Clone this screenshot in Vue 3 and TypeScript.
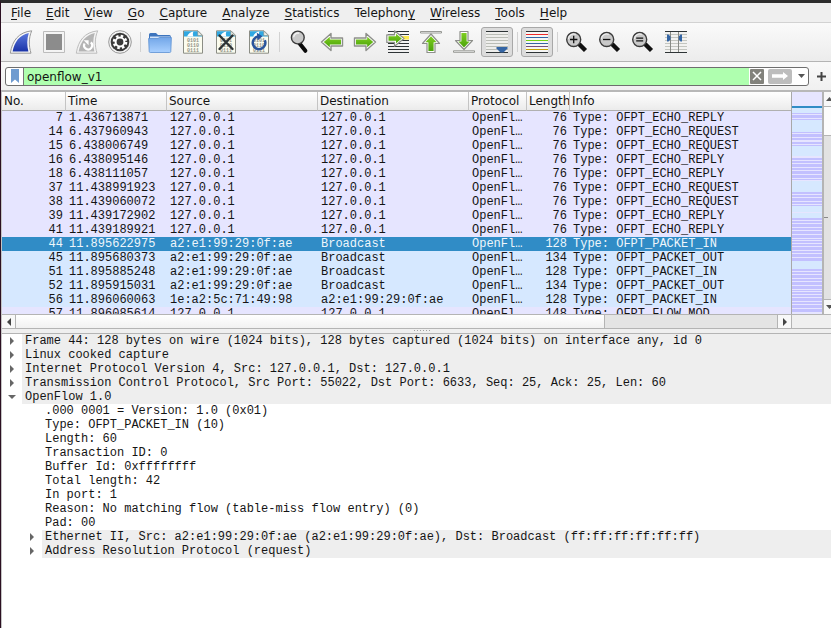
<script setup lang="ts">
import { ref } from 'vue'

interface Packet {
  no: number
  time: string
  source: string
  destination: string
  length: number
  info: string
  kind: 'echo' | 'broadcast'
}

interface DetailRow {
  text: string
  level: 0 | 1
  state: 'open' | 'closed' | 'leaf'
}

interface Stripe {
  y: number
  h: number
  tone: string
}

const menus = ['File', 'Edit', 'View', 'Go', 'Capture', 'Analyze', 'Statistics', 'Telephony', 'Wireless', 'Tools', 'Help']
const mnemonics: Record<string, number> = { Telephony: 8 }
const menuParts = menus.map((name) => {
  const i = mnemonics[name] ?? 0
  return { before: name.slice(0, i), key: name[i], after: name.slice(i + 1) }
})

const filter = ref('openflow_v1')
const selected = ref(44)
const autoScroll = ref(true)
const colorize = ref(true)

const local = '127.0.0.1'
const host = 'a2:e1:99:29:0f:ae'

function echo(no: number, time: string, type: string): Packet {
  return { no, time, source: local, destination: local, length: 76, info: `Type: OFPT_ECHO_${type}`, kind: 'echo' }
}

function lan(no: number, time: string, source: string, destination: string, length: number, type: string): Packet {
  return { no, time, source, destination, length, info: `Type: OFPT_PACKET_${type}`, kind: 'broadcast' }
}

const packets: Packet[] = [
  echo(7, '1.436713871', 'REPLY'),
  echo(14, '6.437960943', 'REQUEST'),
  echo(15, '6.438006749', 'REQUEST'),
  echo(16, '6.438095146', 'REPLY'),
  echo(18, '6.438111057', 'REPLY'),
  echo(37, '11.438991923', 'REQUEST'),
  echo(38, '11.439060072', 'REQUEST'),
  echo(39, '11.439172902', 'REPLY'),
  echo(41, '11.439189921', 'REPLY'),
  lan(44, '11.895622975', host, 'Broadcast', 128, 'IN'),
  lan(45, '11.895680373', host, 'Broadcast', 134, 'OUT'),
  lan(51, '11.895885248', host, 'Broadcast', 128, 'IN'),
  lan(52, '11.895915031', host, 'Broadcast', 134, 'OUT'),
  lan(56, '11.896060063', '1e:a2:5c:71:49:98', host, 128, 'IN'),
  { no: 57, time: '11.896085614', source: local, destination: local, length: 148, info: 'Type: OFPT_FLOW_MOD', kind: 'echo' },
]

const details: DetailRow[] = [
  { text: 'Frame 44: 128 bytes on wire (1024 bits), 128 bytes captured (1024 bits) on interface any, id 0', level: 0, state: 'closed' },
  { text: 'Linux cooked capture', level: 0, state: 'closed' },
  { text: 'Internet Protocol Version 4, Src: 127.0.0.1, Dst: 127.0.0.1', level: 0, state: 'closed' },
  { text: 'Transmission Control Protocol, Src Port: 55022, Dst Port: 6633, Seq: 25, Ack: 25, Len: 60', level: 0, state: 'closed' },
  { text: 'OpenFlow 1.0', level: 0, state: 'open' },
  { text: '.000 0001 = Version: 1.0 (0x01)', level: 1, state: 'leaf' },
  { text: 'Type: OFPT_PACKET_IN (10)', level: 1, state: 'leaf' },
  { text: 'Length: 60', level: 1, state: 'leaf' },
  { text: 'Transaction ID: 0', level: 1, state: 'leaf' },
  { text: 'Buffer Id: 0xffffffff', level: 1, state: 'leaf' },
  { text: 'Total length: 42', level: 1, state: 'leaf' },
  { text: 'In port: 1', level: 1, state: 'leaf' },
  { text: 'Reason: No matching flow (table-miss flow entry) (0)', level: 1, state: 'leaf' },
  { text: 'Pad: 00', level: 1, state: 'leaf' },
  { text: 'Ethernet II, Src: a2:e1:99:29:0f:ae (a2:e1:99:29:0f:ae), Dst: Broadcast (ff:ff:ff:ff:ff:ff)', level: 1, state: 'closed' },
  { text: 'Address Resolution Protocol (request)', level: 1, state: 'closed' },
]

/* Overview strip: one unit per line of the packet list pane. */
const blue = '#d6e8ff'
const violet = '#c2c0ff'
const stripes: Stripe[] = [
  { y: 14, h: 2, tone: '#308cc6' },
  { y: 16, h: 5, tone: blue },
  { y: 21, h: 1, tone: violet },
  { y: 23, h: 3, tone: violet },
  { y: 27, h: 1, tone: violet },
  { y: 28, h: 12, tone: blue },
  { y: 40, h: 1, tone: violet },
  { y: 42, h: 3, tone: violet },
  { y: 46, h: 2, tone: violet },
  { y: 50, h: 2, tone: violet },
  { y: 53, h: 1, tone: violet },
  { y: 54, h: 10, tone: blue },
  ...runs(66, 88),
  { y: 89, h: 11, tone: blue },
  ...runs(100, 114),
  { y: 114, h: 6, tone: blue },
  { y: 121, h: 5, tone: blue },
  ...runs(126, 169),
  { y: 169, h: 8, tone: blue },
  ...runs(177, 221),
]

function runs(from: number, to: number): Stripe[] {
  const sizes = [2, 2, 3, 2, 3, 3, 1]
  const out: Stripe[] = []
  let y = from
  for (let i = 0; y < to; i++) {
    const h = Math.min(sizes[i % sizes.length], to - y)
    out.push({ y, h, tone: violet })
    y += h + 1
  }
  return out
}
</script>

<template>
  <div class="window">
    <nav class="menubar" aria-label="Main menu">
      <button v-for="m in menuParts" :key="m.before + m.key + m.after" type="button">{{ m.before }}<u>{{ m.key }}</u>{{ m.after }}</button>
    </nav>

    <svg class="defs" width="0" height="0" aria-hidden="true">
      <defs>
        <linearGradient id="finBlue" x1="0" y1="0" x2="0" y2="1">
          <stop offset="0" stop-color="#5b78dd" />
          <stop offset="1" stop-color="#1b34a8" />
        </linearGradient>
        <linearGradient id="green" x1="0" y1="0" x2="0" y2="1">
          <stop offset="0" stop-color="#7fce22" />
          <stop offset="1" stop-color="#4ba30a" />
        </linearGradient>
        <linearGradient id="folder" x1="0" y1="0" x2="0" y2="1">
          <stop offset="0" stop-color="#72a6e8" />
          <stop offset="1" stop-color="#a9d0ff" />
        </linearGradient>
        <g id="page">
          <path d="M2.5.8H17L21.5 5.3V23.2H2.5Z" fill="#fbfcef" stroke="#8b8d85" />
          <path d="M3 1.3H16.8L21 5.5V6.5H3Z" fill="#30a8e2" />
          <path d="M6 6.5C7.5 3.5 9.5 2 12.5 1.6C11.6 3.5 11.7 5 12.4 6.5Z" fill="#fff" />
          <path d="M16.8 1V5.6H21.3Z" fill="#f2f2ea" stroke="#8b8d85" stroke-width=".6" />
          <g font-family="Liberation Mono, monospace" font-size="5" font-weight="700" fill="#94948a">
            <text x="6" y="12">0101</text>
            <text x="6" y="17">0110</text>
            <text x="6" y="22">0111</text>
          </g>
        </g>
        <g id="lens">
          <path d="M14 14L20.5 20.5" stroke="#111" stroke-width="4.4" stroke-linecap="butt" />
          <circle cx="8.7" cy="9.5" r="7" fill="#c9c9c9" stroke="#3c3c3c" stroke-width="1.4" />
          <path d="M3.4 9A5.4 5.4 0 0 1 10.8 4.4" fill="none" stroke="#eee" stroke-width="1.2" />
        </g>
        <path id="arrow" d="M1.5 12L11 3.5V8H22.5V16H11V20.5Z" stroke-linejoin="round" />
      </defs>
    </svg>

    <div class="toolbar" role="toolbar" aria-label="Main toolbar">
      <button type="button" aria-label="Start capture">
        <svg viewBox="0 0 24 24">
          <path d="M1.3 23.2C3.3 10.5 9.5 2.3 22.7.8C19.6 8 19.7 16 22 23.2Z" fill="#f8f8f8" stroke="#989898" />
          <path d="M3.6 21.4C5.6 11.6 10.4 5 19.8 2.9C17.8 9 17.9 15.3 19.4 21.4Z" fill="url(#finBlue)" />
        </svg>
      </button>
      <button type="button" aria-label="Stop capture">
        <svg viewBox="0 0 24 24">
          <path d="M1.5 1.5H22.5V22.5H1.5Z" fill="#f4f4f4" stroke="#bcbcbc" />
          <path d="M4 4H20V20H4Z" fill="#8c8c8c" />
        </svg>
      </button>
      <button type="button" aria-label="Restart capture">
        <svg viewBox="0 0 24 24">
          <path d="M1.3 23.2C3.3 10.5 9.5 2.3 22.7.8C19.6 8 19.7 16 22 23.2Z" fill="#f4f4f4" stroke="#bcbcbc" />
          <path d="M3.6 21.4C5.6 11.6 10.4 5 19.8 2.9C17.8 9 17.9 15.3 19.4 21.4Z" fill="#b5b5b5" />
          <path d="M15.8 12.4A4 4 0 1 1 9.6 13.5" fill="none" stroke="#fff" stroke-width="2.2" />
          <path d="M8.6 10.2H13.6V15.2Z" fill="#fff" />
        </svg>
      </button>
      <button type="button" aria-label="Capture options">
        <svg viewBox="0 0 24 24">
          <circle cx="12" cy="12" r="11.3" fill="#f4f4f4" stroke="#989898" />
          <circle cx="12" cy="12" r="9.3" fill="#3a3a3a" />
          <circle cx="12" cy="12" r="6" fill="none" stroke="#fff" stroke-width="2.6" stroke-dasharray="2.5 2.21" />
          <circle cx="12" cy="12" r="4.4" fill="none" stroke="#fff" stroke-width="2" />
        </svg>
      </button>
      <span class="sep" />
      <button type="button" aria-label="Open file">
        <svg viewBox="0 0 24 24">
          <path d="M1 4.5Q1 3 2.5 3H8L10 5H21.5Q22.8 5 22.8 6.5V9H1Z" fill="#3d74bd" />
          <path d="M2 6.5H22V9H2Z" fill="#d4e5fa" />
          <path d="M.6 8.5H10L11.5 7.5H23.4L22.8 21.5Q22.7 22.5 21.7 22.5H2.3Q1.3 22.5 1.2 21.5Z" fill="url(#folder)" stroke="#5b8fd2" stroke-width=".8" />
        </svg>
      </button>
      <button type="button" aria-label="Save file"><svg viewBox="0 0 24 24"><use href="#page" /></svg></button>
      <button type="button" aria-label="Close file">
        <svg viewBox="0 0 24 24">
          <use href="#page" />
          <path d="M5.5 5.5L18.5 19M18.5 5.5L5.5 19" stroke="#2e3436" stroke-width="2.4" stroke-linecap="round" />
        </svg>
      </button>
      <button type="button" aria-label="Reload file">
        <svg viewBox="0 0 24 24">
          <use href="#page" />
          <path d="M17.8 10.2A6.3 6.3 0 1 1 11 6.6" fill="none" stroke="#2a559c" stroke-width="2.5" />
          <path d="M9.8 2.8L15.5 6.2L10.6 10.4Z" fill="#2a559c" />
        </svg>
      </button>
      <span class="sep" />
      <button type="button" aria-label="Find packet">
        <svg viewBox="0 0 24 24">
          <path d="M12.2 13L18.4 20.8" stroke="#0a0a0a" stroke-width="4" stroke-linecap="round" />
          <circle cx="10.8" cy="7.5" r="6.4" fill="#c9c9c9" stroke="#3c3c3c" stroke-width="1.4" />
          <path d="M6.6 7.2A4.6 4.6 0 0 1 12.2 3.2" fill="none" stroke="#f2f2f2" stroke-width="1.4" />
        </svg>
      </button>
      <button type="button" aria-label="Previous packet">
        <svg viewBox="0 0 24 24">
          <use href="#arrow" fill="#fff" stroke="#8d8f8a" stroke-width="1.4" />
          <path d="M3.8 12L9.8 6.8V9.6H21V14.4H9.8V17.2Z" fill="url(#green)" />
        </svg>
      </button>
      <button type="button" aria-label="Next packet">
        <svg viewBox="0 0 24 24">
          <g transform="rotate(180 12 12)"><use href="#arrow" fill="#fff" stroke="#8d8f8a" stroke-width="1.4" /></g>
          <path d="M20.2 12L14.2 6.8V9.6H3V14.4H14.2V17.2Z" fill="url(#green)" />
        </svg>
      </button>
      <button type="button" aria-label="Go to packet">
        <svg viewBox="0 0 24 24">
          <path d="M2 1.5H23M2 4.5H23M2 10.5H23M2 13.5H23M2 16.5H23M2 19.5H23M2 22.5H23" stroke="#2e3436" stroke-width="1" />
          <path d="M15 6H23V9.5H15Z" fill="#fce94f" />
          <path d="M.8 4.8H8.5V.8L18 8.5L8.5 16.2V12.4H.8Z" fill="#fff" stroke="#8d8f8a" stroke-width="1.2" stroke-linejoin="round" />
          <path d="M2.5 6.2H10V3.8L15.8 8.5L10 13.2V10.8H2.5Z" fill="url(#green)" />
        </svg>
      </button>
      <button type="button" aria-label="First packet">
        <svg viewBox="0 0 24 24">
          <path d="M1.5 1.5H22.5V3H1.5Z" fill="#fff" stroke="#8d8f8a" stroke-width=".9" />
          <path d="M12 4L20.5 13.5H16V22.5H8V13.5H3.5Z" fill="#fff" stroke="#8d8f8a" stroke-width="1.2" stroke-linejoin="round" />
          <path d="M12 6.3L17.6 12.2H14.6V21H9.4V12.2H6.4Z" fill="url(#green)" />
        </svg>
      </button>
      <button type="button" aria-label="Last packet">
        <svg viewBox="0 0 24 24">
          <path d="M1.5 20.8H22.5V22.3H1.5Z" fill="#fff" stroke="#8d8f8a" stroke-width=".9" />
          <path d="M12 19.5L20.5 10.5H16V1.5H8V10.5H3.5Z" fill="#fff" stroke="#8d8f8a" stroke-width="1.2" stroke-linejoin="round" />
          <path d="M12 17.4L17.6 11.6H14.6V3H9.4V11.6H6.4Z" fill="url(#green)" />
        </svg>
      </button>
      <button type="button" :class="{ pressed: autoScroll }" :aria-pressed="autoScroll" aria-label="Auto scroll" @click="autoScroll = !autoScroll">
        <svg viewBox="0 0 24 24">
          <path d="M1 2H23V22H1Z" fill="#eeeeec" />
          <path d="M1 1.5H23M1 22.5H23" stroke="#2e3436" />
          <path d="M1 4.5H23M1 7.5H23M1 10.5H23M1 13.5H23M1 16.5H23M1 19.5H23" stroke="#babdb6" />
          <path d="M11.5 17H22.5V18.5L18.5 22.5H15.5L11.5 18.5Z" fill="#3465a4" />
        </svg>
      </button>
      <span class="sep" />
      <button type="button" :class="{ pressed: colorize }" :aria-pressed="colorize" aria-label="Colorize packets" @click="colorize = !colorize">
        <svg viewBox="0 0 24 24">
          <path d="M1 2H23V22H1Z" fill="#f6f6f5" />
          <path d="M1 1.5H23M1 22.5H23" stroke="#2e3436" />
          <path d="M1 4.5H23" stroke="#ef2929" />
          <path d="M1 7.5H23M1 13.5H23" stroke="#3465a4" />
          <path d="M1 10.5H23" stroke="#73d216" />
          <path d="M1 16.5H23" stroke="#75507b" />
          <path d="M1 19.5H23" stroke="#c4a000" />
        </svg>
      </button>
      <span class="sep" />
      <button type="button" aria-label="Zoom in">
        <svg viewBox="0 0 24 24"><use href="#lens" /><path d="M5 9.5H12.4M8.7 5.8V13.2" stroke="#111" stroke-width="1.3" /></svg>
      </button>
      <button type="button" aria-label="Zoom out">
        <svg viewBox="0 0 24 24"><use href="#lens" /><path d="M5 9.5H12.4" stroke="#111" stroke-width="1.3" /></svg>
      </button>
      <button type="button" aria-label="Normal size">
        <svg viewBox="0 0 24 24"><use href="#lens" /><path d="M5.2 8.2H12.2M5.2 10.8H12.2" stroke="#111" stroke-width="1.2" /></svg>
      </button>
      <button type="button" aria-label="Resize columns">
        <svg viewBox="0 0 24 24">
          <path d="M1 2H23V22H1Z" fill="#f2f2f0" />
          <path d="M1 4.5H23M1 7.5H23M1 10.5H23M1 13.5H23M1 16.5H23M1 19.5H23" stroke="#c3c5bf" />
          <path d="M1 1.5H23M1 22.5H23" stroke="#2e3436" />
          <path d="M6.5 2V22M14.5 2V22" stroke="#888a85" />
          <path d="M3 4.5H4.5L6.5 6.5V9.5L4.5 11.5H3ZM18 4.5H16.5L14.8 6.5V9.5L16.5 11.5H18Z" fill="#3465a4" />
        </svg>
      </button>
    </div>

    <form class="filterbar" @submit.prevent>
      <div class="field">
        <button class="bookmark" type="button" aria-label="Filter bookmarks">
          <svg width="8" height="14" viewBox="0 0 8 14"><path d="M0 0H8V14L4 10.5L0 14Z" fill="#6f9bd0" /></svg>
        </button>
        <input v-model="filter" type="text" aria-label="Display filter" spellcheck="false" />
        <button class="clear" type="button" aria-label="Clear filter" @click="filter = ''">
          <svg width="14" height="14" viewBox="0 0 14 14"><path d="M3 3L11 11M11 3L3 11" stroke="#fff" stroke-width="1.5" /></svg>
        </button>
        <button class="apply" type="submit" aria-label="Apply filter">
          <svg width="24" height="14" viewBox="0 0 24 14"><path d="M4 5.2H15V3L20 7L15 11V8.8H4Z" fill="#fff" /></svg>
        </button>
        <button class="recent" type="button" aria-label="Recent filters">
          <svg width="7" height="4" viewBox="0 0 7 4"><path d="M0 0H7L3.5 4Z" fill="#555" /></svg>
        </button>
      </div>
      <button class="add" type="button" aria-label="Add filter button">
        <svg width="9" height="9" viewBox="0 0 9 9"><path d="M0 4.5H9M4.5 0V9" stroke="#444" stroke-width="2" /></svg>
      </button>
    </form>

    <main>
      <section class="list">
        <div class="grid">
          <table>
            <colgroup>
              <col class="c-no" /><col class="c-time" /><col class="c-addr" /><col class="c-addr" /><col class="c-proto" /><col class="c-len" /><col />
            </colgroup>
            <thead>
              <tr><th>No.</th><th>Time</th><th>Source</th><th>Destination</th><th>Protocol</th><th>Length</th><th>Info</th></tr>
            </thead>
            <tbody>
              <tr v-for="p in packets" :key="p.no" :class="[p.kind, { selected: p.no === selected }]" @click="selected = p.no">
                <td class="num">{{ p.no }}</td>
                <td>{{ p.time }}</td>
                <td>{{ p.source }}</td>
                <td>{{ p.destination }}</td>
                <td>OpenFl…</td>
                <td class="num">{{ p.length }}</td>
                <td>{{ p.info }}</td>
              </tr>
            </tbody>
          </table>
        </div>
        <svg class="overview" viewBox="0 0 30 222" preserveAspectRatio="none" shape-rendering="crispEdges" aria-hidden="true">
          <rect width="30" height="222" fill="#e6e5ff" />
          <rect v-for="s in stripes" :key="s.y" :y="s.y" width="30" :height="s.h" :fill="s.tone" />
        </svg>
        <div class="vscroll">
          <button type="button" aria-label="Scroll up"><svg width="7" height="4" viewBox="0 0 7 4"><path d="M0 4H7L3.5 0Z" fill="#555" /></svg></button>
          <span class="vthumb" />
          <span class="vtrough"><i /></span>
          <button type="button" aria-label="Scroll down"><svg width="7" height="4" viewBox="0 0 7 4"><path d="M0 0H7L3.5 4Z" fill="#555" /></svg></button>
        </div>
      </section>

      <div class="hscroll">
        <button type="button" aria-label="Scroll left"><svg width="4" height="8" viewBox="0 0 4 8"><path d="M4 0V8L0 4Z" fill="#444" /></svg></button>
        <span class="hthumb" />
        <span class="htrough" />
        <button type="button" aria-label="Scroll right"><svg width="4" height="8" viewBox="0 0 4 8"><path d="M0 0V8L4 4Z" fill="#444" /></svg></button>
        <span class="corner" />
      </div>

      <div class="splitter"><span /></div>

      <ul class="details" role="tree" aria-label="Packet details">
        <li v-for="d in details" :key="d.text" role="treeitem" :class="['level' + d.level, d.state]">
          <span class="twist">
            <svg v-if="d.state === 'closed'" width="4" height="8" viewBox="0 0 4 8"><path d="M0 0V8L4 4Z" fill="#666" /></svg>
            <svg v-else-if="d.state === 'open'" width="8" height="4" viewBox="0 0 8 4"><path d="M0 0H8L4 4Z" fill="#666" /></svg>
          </span>
          <span class="label">{{ d.text }}</span>
        </li>
      </ul>
    </main>
  </div>
</template>

<style>
body {
  margin: 0;
  background: #fff;
}
</style>

<style scoped>
.window {
  display: flex;
  flex-direction: column;
  box-sizing: border-box;
  min-height: 100vh;
  border-top: 3px solid #2d2d2d;
  border-left: 1px solid #2c1022;
  background: #efefef;
  color: #141414;
  font: 12px/14px "DejaVu Sans", sans-serif;
  overflow: hidden;
}

button {
  display: flex;
  align-items: center;
  justify-content: center;
  margin: 0;
  padding: 0;
  border: 0;
  background: none;
  color: inherit;
  font: inherit;
}

svg {
  display: block;
  flex: none;
}

.defs {
  position: absolute;
}

.menubar {
  display: flex;
  gap: 1px;
  height: 19px;
  padding-left: 3px;
  border-bottom: 1px solid #d2d2d2;
}

.menubar button {
  display: block;
  padding: 1px 7px 0;
  line-height: 18px;
}

.menubar u {
  text-underline-offset: 2px;
  text-decoration-thickness: 1px;
}

.toolbar {
  display: flex;
  gap: 1px;
  padding: 4px;
  border-bottom: 1px solid #b4b4b4;
  background: linear-gradient(#fafafa, #ececec);
}

.toolbar button {
  box-sizing: border-box;
  width: 32px;
  height: 30px;
}

.toolbar svg {
  width: 24px;
  height: 24px;
}

.toolbar .pressed {
  border: 1px solid #a8a8a8;
  border-radius: 3px;
  background: #dcdcdc;
}

.sep {
  box-sizing: border-box;
  flex: 0 0 3px;
  margin: 5px 0 5px 3px;
  border-left: 1px solid #d2d2d2;
}

.filterbar {
  display: flex;
  align-items: center;
  height: 28px;
  padding-left: 4px;
  border-bottom: 2px solid #b8b8b8;
  background: linear-gradient(#f9f9f9, #f0f0f0);
}

.field {
  display: flex;
  flex: 1;
  align-items: stretch;
  box-sizing: border-box;
  height: 19px;
  border: 1px solid #6e6e6e;
  border-radius: 3px;
  background: #fff;
  overflow: hidden;
}

.bookmark {
  width: 18px;
  border-right: 1px solid #777;
}

.field input {
  flex: 1;
  min-width: 0;
  padding: 1px 3px 0;
  border: 0;
  outline: 0;
  background: #afffaf;
  color: #141414;
  font: inherit;
}

.clear {
  margin: 1px;
  border-radius: 1px;
  background: #82827c;
}

.apply {
  margin: 1px 3px;
  border-radius: 2px;
  background: #bdbdbd;
}

.recent {
  width: 13px;
}

.add {
  width: 22px;
  height: 19px;
  padding-left: 2px;
}

main {
  display: flex;
  flex: 1;
  flex-direction: column;
  border-left: 1px solid #c4c4c4;
}

.list {
  display: flex;
  height: 222px;
  border-bottom: 1px solid #b4b4b4;
  overflow: hidden;
}

.grid {
  flex: 1;
  min-width: 0;
  overflow: hidden;
  background: #e6e5ff;
}

table {
  width: 100%;
  table-layout: fixed;
  border-collapse: separate;
  border-spacing: 0;
}

.c-no {
  width: 64px;
}

.c-time {
  width: 101px;
}

.c-addr {
  width: 151px;
}

.c-proto {
  width: 58px;
}

.c-len {
  width: 43px;
}

th {
  height: 18px;
  padding: 0 0 0 2px;
  border-right: 1px solid #c4c4c4;
  border-bottom: 1px solid #b0b0b0;
  background: linear-gradient(#fff, #ebebeb);
  font-weight: 400;
  text-align: left;
  white-space: nowrap;
  overflow: hidden;
}

th:last-child {
  border-right: 0;
}

td {
  height: 14px;
  padding: 0 3px;
  font: 12px/14px "Liberation Mono", monospace;
  white-space: nowrap;
  overflow: hidden;
  text-overflow: ellipsis;
}

.num {
  text-align: right;
}

.echo {
  background: #e6e5ff;
}

.broadcast {
  background: #d6e8ff;
}

.selected {
  background: #308cc6;
  color: #eef6fb;
}

.overview {
  width: 30px;
  height: 222px;
  border-left: 1px solid #a8a8a8;
  border-right: 2px solid #b4b4b4;
}

.vscroll {
  display: flex;
  flex-direction: column;
  width: 7px;
  background: #e2e2e2;
  overflow: hidden;
}

.vscroll button {
  height: 14px;
  justify-content: flex-start;
  padding-left: 2px;
  background: #f8f8f8;
}

.vthumb {
  height: 28px;
  border-top: 1px solid #b4b4b4;
  border-bottom: 1px solid #b4b4b4;
  background: #fcfcfc;
}

.vtrough {
  display: flex;
  flex: 1;
  align-items: center;
  border-bottom: 1px solid #b4b4b4;
}

.vtrough i {
  width: 4px;
  height: 1px;
  background: #888;
}

.hscroll {
  display: flex;
  height: 13px;
  border-bottom: 1px solid #b4b4b4;
}

.hscroll button {
  width: 13px;
  background: #f8f8f8;
}

.hthumb {
  flex: 589;
  border: solid #b4b4b4;
  border-width: 0 1px;
  background: linear-gradient(#fff, #f1f1f1);
}

.htrough {
  flex: 172;
  border-right: 1px solid #b4b4b4;
  background: #e4e4e4;
}

.corner {
  width: 39px;
  border-left: 1px solid #b4b4b4;
}

.splitter {
  display: flex;
  justify-content: center;
  height: 4px;
  padding-left: 10px;
  border-bottom: 1px solid #b4b4b4;
}

.splitter span {
  width: 16px;
  height: 1px;
  margin-top: 1px;
  background: repeating-linear-gradient(90deg, #a0a0a0 0 1px, transparent 1px 3px);
}

.details {
  flex: 1;
  margin: 0;
  padding: 0;
  background: #fff;
  list-style: none;
  font: 12px/14px "Liberation Mono", monospace;
}

.details li {
  display: flex;
  height: 14px;
}

.level1 {
  padding-left: 20px;
}

.twist {
  display: flex;
  flex: 0 0 20px;
  align-items: center;
  justify-content: center;
}

.label {
  flex: 1;
  min-width: 0;
  padding-left: 3px;
  white-space: nowrap;
}

.open .label,
.closed .label {
  background: #eee;
}
</style>
